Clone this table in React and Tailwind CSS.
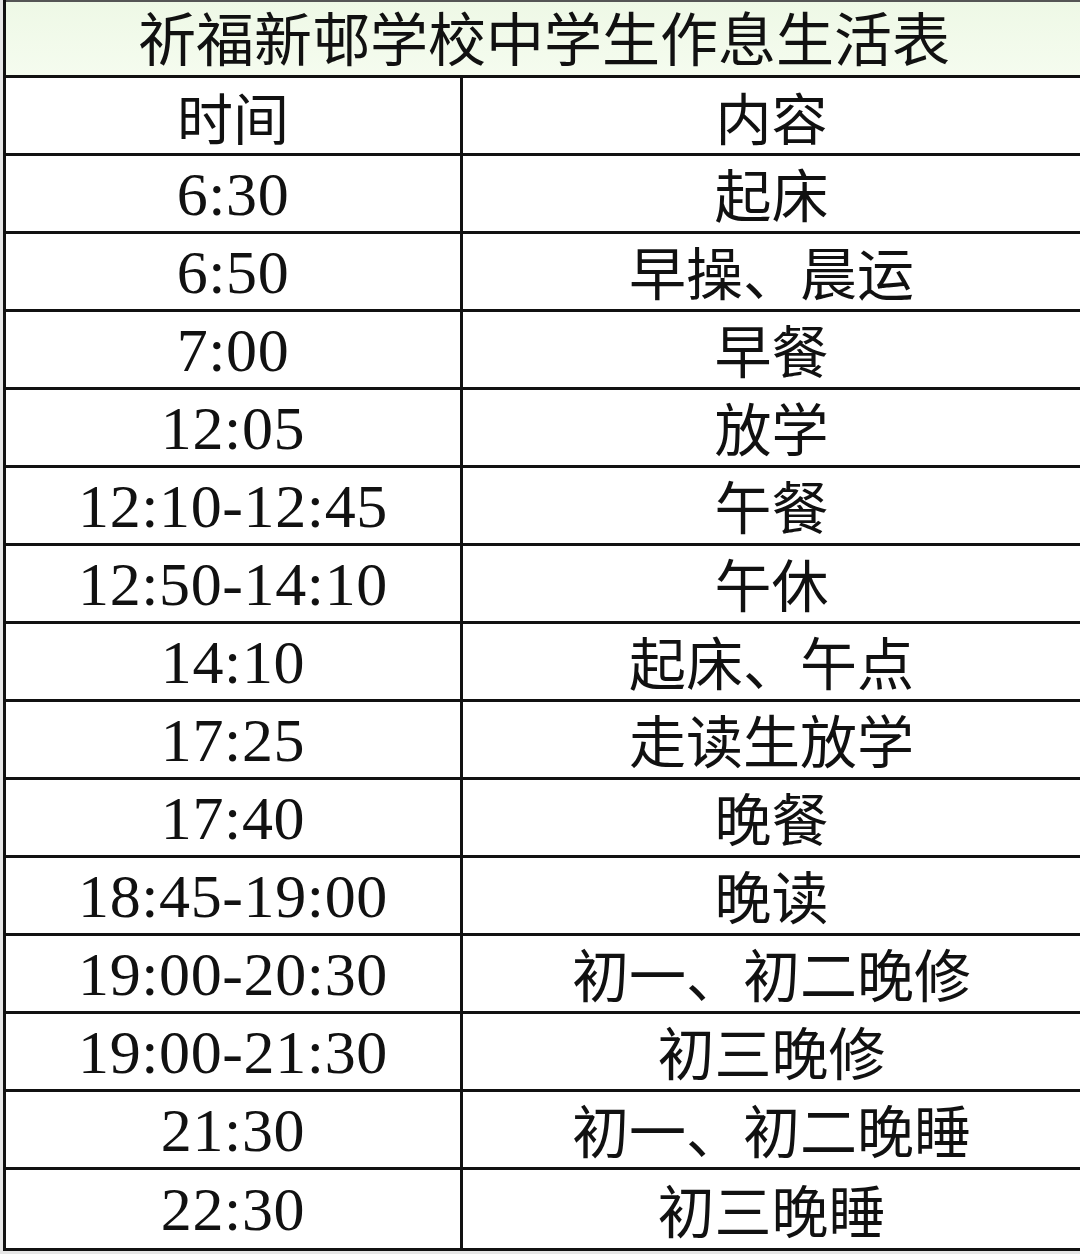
const rows = [
  ['6:30', '起床'],
  ['6:50', '早操、晨运'],
  ['7:00', '早餐'],
  ['12:05', '放学'],
  ['12:10-12:45', '午餐'],
  ['12:50-14:10', '午休'],
  ['14:10', '起床、午点'],
  ['17:25', '走读生放学'],
  ['17:40', '晚餐'],
  ['18:45-19:00', '晚读'],
  ['19:00-20:30', '初一、初二晚修'],
  ['19:00-21:30', '初三晚修'],
  ['21:30', '初一、初二晚睡'],
  ['22:30', '初三晚睡'],
];

const cjk = "font-['Noto_Sans_CJK_SC','Noto_Sans_CJK_JP',sans-serif]";
const num = "font-['Liberation_Serif','Noto_Sans_CJK_SC',serif]";

export default function App() {
  return (
    <div className="w-[1080px] h-[1254px] bg-[#e6e6e6] text-[#111]">
      <div className="ml-[3px] w-[1077px] bg-white border-l-[3px] border-b-[3px] border-[#111]">
        {/* title */}
        <div className="h-[78px] border-t-2 border-t-[#555] border-b-[3px] border-b-[#111] bg-gradient-to-b from-[#eef8e6] to-[#f5fcef] flex items-center justify-center pb-[3px] pl-[2px]">
          <span className={`text-[58px] leading-[1.2] ${cjk}`}>祈福新邨学校中学生作息生活表</span>
        </div>

        {/* header */}
        <div className="grid grid-cols-[457px_1fr] h-[78px] border-b-[3px] border-[#111]">
          <div className={`border-r-[3px] border-[#111] flex items-center justify-center text-[56px] leading-none ${cjk}`}>
            时间
          </div>
          <div className={`flex items-center justify-center text-[56px] leading-none ${cjk}`}>
            内容
          </div>
        </div>

        {rows.map(([time, what], i) => (
          <div
            key={i}
            className={`grid grid-cols-[457px_1fr] h-[78px] ${i < rows.length - 1 ? 'border-b-[3px] border-[#111]' : ''}`}
          >
            <div className={`border-r-[3px] border-[#111] flex items-center justify-center text-[62px] leading-none tracking-[0.01em] ${num}`}>
              {time}
            </div>
            <div className={`flex items-center justify-center pb-[2px] text-[57px] leading-none ${cjk}`}>
              {what}
            </div>
          </div>
        ))}
      </div>
    </div>
  );
}
